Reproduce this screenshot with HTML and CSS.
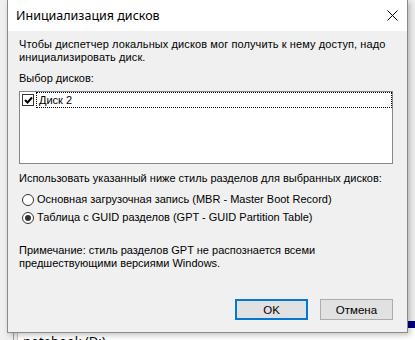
FILE: index.html
```html
<!DOCTYPE html>
<html lang="ru">
<head>
    <meta charset="UTF-8">
    <title>Инициализация дисков</title>
    <link rel="stylesheet" href="styles.css">
</head>
<body>
    <div class="desktop">
        <div class="back-window">
            <div class="back-list">
                <div class="back-item">notebook (D:)</div>
            </div>
        </div>
        <div class="side-band"></div>

        <div class="dialog">
            <div class="titlebar">
                <span class="title">Инициализация дисков</span>
                <svg class="close" width="11" height="11" viewBox="0 0 11 11">
                    <path d="M0.5 0.5 L10.5 10.5 M10.5 0.5 L0.5 10.5" stroke="#000" stroke-width="1" fill="none"/>
                </svg>
            </div>
            <div class="content">
                <p class="intro">Чтобы диспетчер локальных дисков мог получить к нему доступ, надо инициализировать диск.</p>
                <div class="label">Выбор дисков:</div>
                <div class="listbox">
                    <div class="list-row">
                        <span class="checkbox">
                            <svg width="9" height="9" viewBox="0 0 9 9">
                                <path d="M1 4 L3.5 6.5 L8 1.5" stroke="#000" stroke-width="2" fill="none"/>
                            </svg>
                        </span>
                        <span class="item-text">Диск 2</span>
                    </div>
                </div>
                <div class="label style-label">Использовать указанный ниже стиль разделов для выбранных дисков:</div>
                <div class="radios">
                    <div class="radio-row">
                        <span class="radio"></span>
                        <span>Основная загрузочная запись (MBR - Master Boot Record)</span>
                    </div>
                    <div class="radio-row">
                        <span class="radio checked"></span>
                        <span>Таблица с GUID разделов (GPT - GUID Partition Table)</span>
                    </div>
                </div>
                <p class="note">Примечание: стиль разделов GPT не распознается всеми<br>предшествующими версиями Windows.</p>
                <div class="buttons">
                    <button class="btn btn-default">OK</button>
                    <button class="btn">Отмена</button>
                </div>
            </div>
        </div>
    </div>
</body>
</html>
```

FILE: styles.css
```css
:root {
    --face: #f0f0f0;
    --border: #8a8a8a;
    --text: #000000;
    --accent: #0078d7;
}
* {
    margin: 0;
    padding: 0;
    box-sizing: border-box;
}
body {
    width: 415px;
    height: 340px;
    overflow: hidden;
    background-color: var(--face);
    font-family: 'Liberation Sans', Arial, sans-serif;
    font-size: 11px;
    line-height: 13px;
    color: var(--text);
}
.desktop {
    position: relative;
    width: 415px;
    height: 340px;
}
.back-window {
    position: absolute;
    left: 13px;
    top: 326px;
    width: 402px;
    height: 20px;
    border-left: 1px solid #a0a0a0;
}
.back-list {
    background: #ffffff;
    height: 100%;
    margin-left: 3px;
    border-left: 1px solid #c8c8c8;
}
.back-item {
    padding: 9px 0 0 5px;
    font-family: 'Noto Sans', sans-serif;
    font-size: 13px;
}
.side-band {
    position: absolute;
    left: 408px;
    top: 321px;
    width: 7px;
    height: 7px;
    background: #000080;
}
.dialog {
    position: absolute;
    left: 7px;
    top: 0;
    width: 401px;
    height: 333px;
    background-color: var(--face);
    border: 1px solid var(--border);
    border-top: none;
    box-shadow: 2px 2px 6px rgba(0, 0, 0, 0.25);
    display: flex;
    flex-direction: column;
}
.titlebar {
    height: 31px;
    background: #ffffff;
    display: flex;
    align-items: center;
    justify-content: space-between;
    padding: 0 9px 0 8px;
}
.title {
    font-family: 'Noto Sans', sans-serif;
    font-size: 12.5px;
}
.close {
    display: block;
}
.content {
    flex: 1;
    padding: 7px 14px 0 11px;
    display: flex;
    flex-direction: column;
}
.intro {
    width: 375px;
    letter-spacing: 0.1px;
}
.label {
    margin-top: 8px;
}
.listbox {
    margin-top: 6px;
    height: 73px;
    background: #ffffff;
    border: 1px solid #828790;
}
.list-row {
    display: flex;
    align-items: center;
    height: 16px;
    padding-left: 2px;
}
.checkbox {
    width: 12px;
    height: 12px;
    border: 1px solid #333333;
    background: #ffffff;
    display: flex;
    align-items: center;
    justify-content: center;
}
.item-text {
    flex: 1;
    height: 16px;
    margin-left: 2px;
    padding-left: 2px;
    border: 1px dotted #000000;
    line-height: 14px;
}
.style-label {
    margin-top: 8px;
}
.radios {
    margin-top: 8px;
    display: flex;
    flex-direction: column;
    gap: 5px;
}
.radio-row {
    display: flex;
    align-items: center;
    gap: 3px;
    padding-left: 3px;
}
.radio {
    width: 12px;
    height: 12px;
    border-radius: 50%;
    border: 1px solid #333333;
    background: #ffffff;
    display: flex;
    align-items: center;
    justify-content: center;
}
.radio.checked::after {
    content: "";
    width: 6px;
    height: 6px;
    border-radius: 50%;
    background: #333333;
}
.note {
    margin-top: 20px;
}
.buttons {
    margin-top: 29px;
    display: flex;
    justify-content: flex-end;
    gap: 12px;
}
.btn {
    width: 73px;
    height: 21px;
    background: #e1e1e1;
    border: 1px solid #adadad;
    font-family: 'Liberation Sans', Arial, sans-serif;
    font-size: 11.5px;
    color: var(--text);
}
.btn-default {
    border: 2px solid var(--accent);
}
```
